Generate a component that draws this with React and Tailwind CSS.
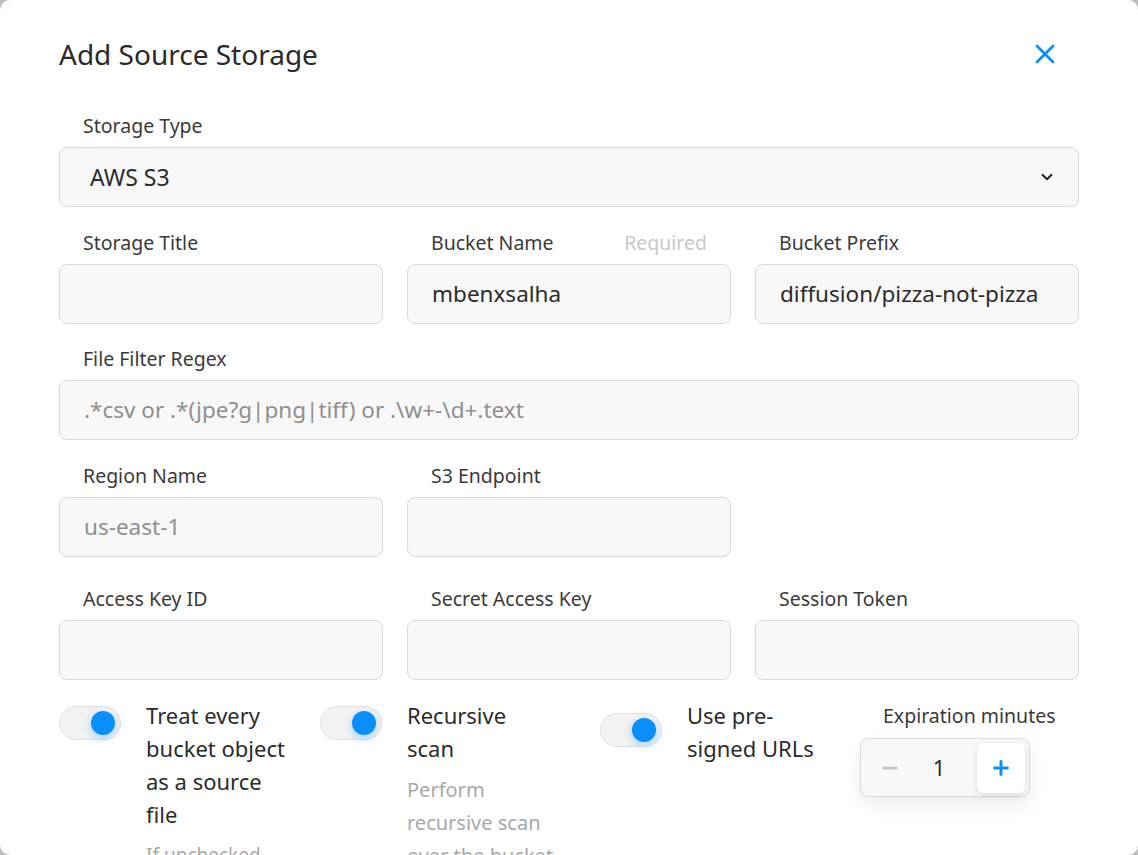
import { X, ChevronDown, Minus, Plus } from "lucide-react";

const font = { fontFamily: "'Noto Sans', 'Open Sans', sans-serif" };

function Field({ label, value, placeholder, extra, className = "" }) {
  return (
    <div className={className}>
      <div className="flex justify-between pl-6 pr-6 text-[19.5px] leading-[26px] text-[#3a3a3a] mb-2">
        <span>{label}</span>
        {extra && <span className="text-[#c8c8c8]">{extra}</span>}
      </div>
      <div className="h-[60px] rounded-lg border border-[#d9d9d9] bg-[#f8f8f8] px-6 flex items-center text-[22.5px]">
        {value ? (
          <span className="text-[#2b2b2b]">{value}</span>
        ) : (
          <span className="text-[#8f8f8f]">{placeholder}</span>
        )}
      </div>
    </div>
  );
}

function Toggle({ className = "" }) {
  return (
    <div
      className={`w-[62px] h-[34px] shrink-0 rounded-full border border-[#e2e2e2] bg-[#f2f2f2] flex items-center justify-end pr-[5px] ${className}`}
    >
      <div className="w-[24px] h-[24px] rounded-full bg-[#0a8fff] shadow-[0_3px_10px_rgba(10,143,255,0.35)]" />
    </div>
  );
}

export default function App() {
  return (
    <div className="h-[855px] overflow-hidden bg-[#bdbdbd]" style={font}>
      <div className="h-full bg-white rounded-[10px]">
        <header className="flex items-center justify-between pl-[59px] pr-[77px] pt-[36px]">
          <h1 className="text-[28px] leading-[36px] text-[#2a2a2a]">Add Source Storage</h1>
          <X className="w-[32px] h-[32px] text-[#0a8fff]" strokeWidth={2.1} />
        </header>

        <div className="px-[59px] w-[1138px] pt-[41px]">
          <div>
            <div className="pl-6 text-[19.5px] leading-[26px] text-[#3a3a3a] mb-2">Storage Type</div>
            <div className="h-[60px] rounded-lg border border-[#d9d9d9] bg-[#f8f8f8] pl-[30px] pr-[22px] flex items-center justify-between text-[23px] text-[#2b2b2b]">
              <span>AWS S3</span>
              <ChevronDown className="w-[18px] h-[18px] text-[#222]" strokeWidth={2.5} />
            </div>
          </div>

          <div className="grid grid-cols-3 gap-x-6 mt-[23px]">
            <Field label="Storage Title" />
            <Field label="Bucket Name" value="mbenxsalha" extra="Required" />
            <Field label="Bucket Prefix" value="diffusion/pizza-not-pizza" />
          </div>

          <Field
            className="mt-[22px]"
            label="File Filter Regex"
            placeholder=".*csv or .*(jpe?g|png|tiff) or .\w+-\d+.text"
          />

          <div className="grid grid-cols-3 gap-x-6 mt-[23px]">
            <Field label="Region Name" placeholder="us-east-1" />
            <Field label="S3 Endpoint" />
          </div>

          <div className="grid grid-cols-3 gap-x-6 mt-[29px]">
            <Field label="Access Key ID" />
            <Field label="Secret Access Key" />
            <Field label="Session Token" />
          </div>

          <div className="flex mt-[19px] text-[22px] leading-[33px]">
            <div className="flex w-[261px]">
              <Toggle className="mt-[7px]" />
              <div className="ml-[25px] w-[150px]">
                <div className="text-[#2b2b2b]">Treat every bucket object as a source file</div>
                <div className="text-[19px] text-[#a8a8a8] mt-[8px]">If unchecked, the bucket</div>
              </div>
            </div>
            <div className="flex w-[280px]">
              <Toggle className="mt-[7px]" />
              <div className="ml-[25px] w-[150px]">
                <div className="text-[#2b2b2b]">Recursive scan</div>
                <div className="text-[20px] text-[#a8a8a8] mt-[8px]">Perform recursive scan over the bucket contents</div>
              </div>
            </div>
            <div className="flex w-[260px]">
              <Toggle className="mt-[14px]" />
              <div className="ml-[25px] w-[140px] text-[#2b2b2b]">Use pre-signed URLs</div>
            </div>
            <div>
              <div className="pl-[23px] text-[19.5px] leading-[33px] text-[#3a3a3a]">Expiration minutes</div>
              <div className="mt-[6px] w-[170px] h-[59px] rounded-lg border border-[#d9d9d9] bg-[#f8f8f8] flex items-center pl-[18px] pr-[4px] shadow-[0_8px_16px_rgba(0,0,0,0.08)]">
                <Minus className="w-[22px] h-[22px] text-[#c4c4c4]" strokeWidth={3} />
                <span className="flex-1 text-center text-[22px] text-[#2b2b2b]">1</span>
                <div className="w-[48px] h-[50px] rounded-md bg-white shadow-[0_2px_6px_rgba(0,0,0,0.12)] flex items-center justify-center">
                  <Plus className="w-[22px] h-[22px] text-[#0a8fff]" strokeWidth={3.2} />
                </div>
              </div>
            </div>
          </div>
        </div>
      </div>
    </div>
  );
}
